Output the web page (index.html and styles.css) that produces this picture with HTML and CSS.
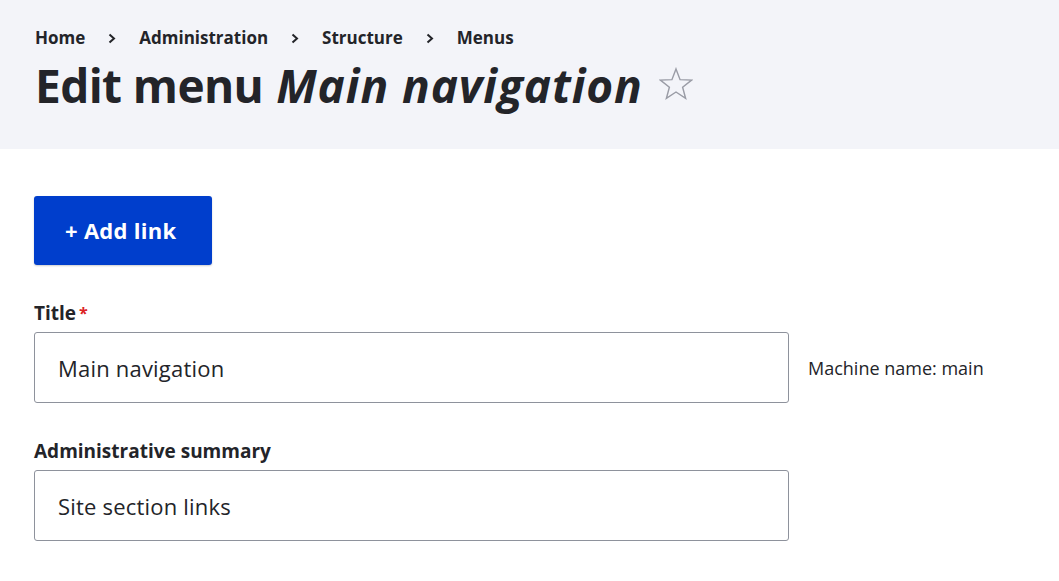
FILE: index.html
```html
<!DOCTYPE html>
<html lang="en">
<head>
    <meta charset="UTF-8">
    <title>Edit menu Main navigation</title>
    <link rel="stylesheet" href="styles.css">
</head>
<body>

    <div class="page-header">
        <nav class="breadcrumb">
            <a href="#">Home</a>
            <svg class="sep" width="8" height="11" viewBox="0 0 8 11"><path d="M1.5 1.5 L6 5.5 L1.5 9.5" fill="none" stroke="#232429" stroke-width="2"/></svg>
            <a href="#">Administration</a>
            <svg class="sep" width="8" height="11" viewBox="0 0 8 11"><path d="M1.5 1.5 L6 5.5 L1.5 9.5" fill="none" stroke="#232429" stroke-width="2"/></svg>
            <a href="#">Structure</a>
            <svg class="sep" width="8" height="11" viewBox="0 0 8 11"><path d="M1.5 1.5 L6 5.5 L1.5 9.5" fill="none" stroke="#232429" stroke-width="2"/></svg>
            <a href="#">Menus</a>
        </nav>
        <h1 class="page-title">
            Edit menu <em>Main navigation</em>
            <svg class="star" width="34" height="34" viewBox="0 0 36 36">
                <polygon points="18,2 22.3,13.4 34.5,13.9 25,21.5 28.2,33.3 18,26.5 7.8,33.3 11,21.5 1.5,13.9 13.7,13.4" fill="none" stroke="#9a9ca6" stroke-width="1.5" stroke-linejoin="miter"/>
            </svg>
        </h1>
    </div>

    <div class="content">
        <a class="button" href="#">+ Add link</a>

        <form class="menu-form">
            <div class="form-item">
                <label for="title">Title<span class="required">*</span></label>
                <div class="field-row">
                    <input type="text" id="title" value="Main navigation">
                    <span class="machine-name">Machine name: main</span>
                </div>
            </div>

            <div class="form-item">
                <label for="summary">Administrative summary</label>
                <div class="field-row">
                    <input type="text" id="summary" value="Site section links">
                </div>
            </div>
        </form>
    </div>

</body>
</html>
```
FILE: styles.css
```css
body {
    margin: 0;
    font-family: "Open Sans", "Noto Sans", sans-serif;
    color: #232429;
    background-color: #fff;
}

.page-header {
    background-color: #f3f4f9;
    padding: 26px 35px 34px;
}

.breadcrumb {
    display: flex;
    align-items: center;
    gap: 23px;
    font-size: 17px;
    font-weight: 700;
    line-height: 24px;
}

.breadcrumb a {
    color: #232429;
    text-decoration: none;
}

.breadcrumb .sep {
    margin-top: 1px;
}

.page-title {
    display: flex;
    align-items: center;
    margin: 5px 0 0;
    font-size: 46px;
    font-weight: 700;
    line-height: 60px;
    letter-spacing: -0.6px;
}

.page-title em {
    margin-left: 13px;
    font-style: italic;
    letter-spacing: 0.9px;
}

.page-title .star {
    margin-left: 16px;
    margin-top: -2px;
}

.content {
    padding: 47px 34px 0;
}

.button {
    display: inline-block;
    padding: 20px 35px 20px 31px;
    background-color: #003ecc;
    color: #fff;
    font-size: 22px;
    font-weight: 700;
    line-height: 29px;
    letter-spacing: 0.3px;
    text-decoration: none;
    border-radius: 3px;
    box-shadow: 0 1px 2px rgba(0, 0, 0, 0.2);
}

.menu-form {
    margin-top: 35px;
}

.form-item {
    margin-bottom: 35px;
}

.form-item label {
    display: block;
    margin-bottom: 6px;
    font-size: 19px;
    font-weight: 700;
    line-height: 26px;
}

.required {
    color: #dc2323;
    margin-left: 3px;
    font-size: 16px;
    vertical-align: top;
}

.field-row {
    display: flex;
    align-items: center;
    gap: 19px;
}

.field-row input {
    width: 755px;
    height: 71px;
    box-sizing: border-box;
    padding: 0 23px;
    border: 1px solid #8e929c;
    border-radius: 3px;
    font-family: inherit;
    font-size: 22px;
    letter-spacing: 0.2px;
    color: #232429;
}

.machine-name {
    font-size: 18px;
    color: #232429;
}
```
